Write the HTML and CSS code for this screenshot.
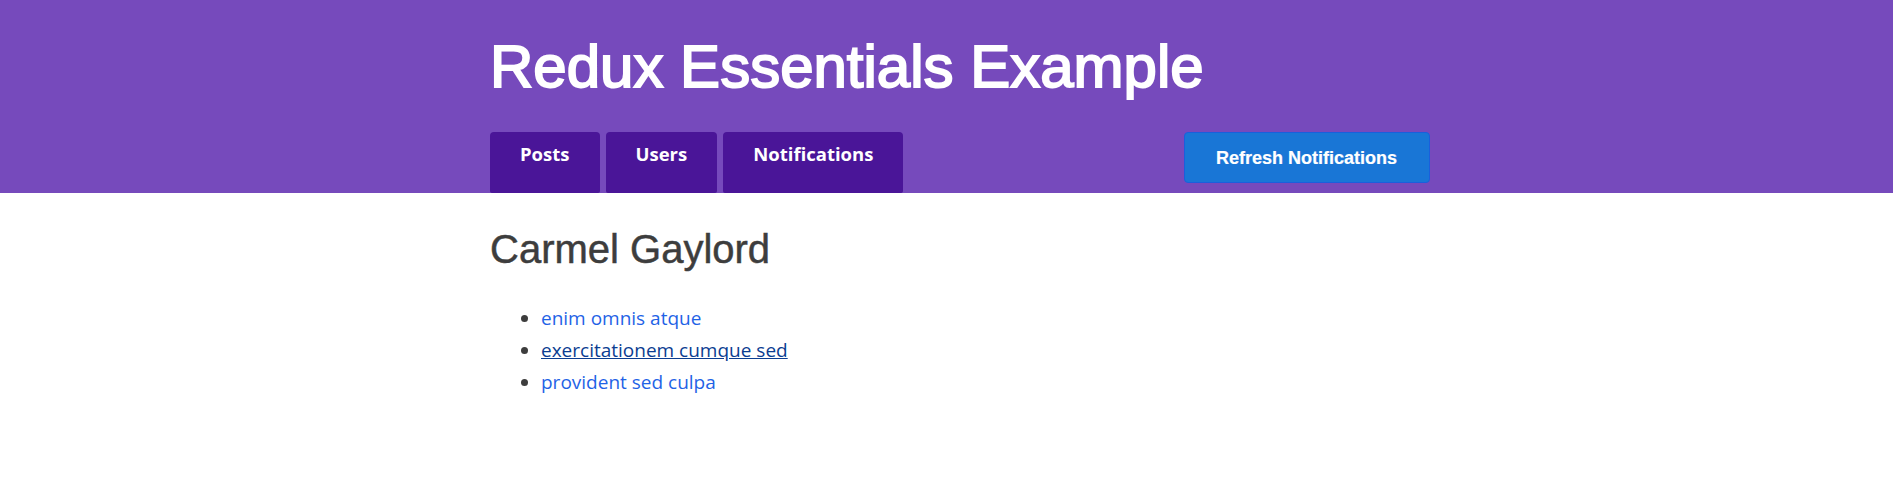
FILE: index.html
```html
<!DOCTYPE html>
<html lang="en">
<head>
<meta charset="utf-8">
<title>Redux Essentials Example</title>
<link rel="stylesheet" href="styles.css">
</head>
<body>
<nav class="nav">
  <section class="container">
    <h1 class="title">Redux Essentials Example</h1>
    <div class="nav-content">
      <div class="nav-links">
        <a class="nav-link" href="#">Posts</a>
        <a class="nav-link" href="#">Users</a>
        <a class="nav-link" href="#">Notifications</a>
      </div>
      <button class="refresh" type="button">Refresh Notifications</button>
    </div>
  </section>
</nav>
<main class="container main">
  <h2 class="user-name">Carmel Gaylord</h2>
  <ul class="post-list">
    <li><a class="post-link" href="#">enim omnis atque</a></li>
    <li><a class="post-link visited" href="#">exercitationem cumque sed</a></li>
    <li><a class="post-link" href="#">provident sed culpa</a></li>
  </ul>
</main>
</body>
</html>
```
FILE: styles.css
```css
html, body {
  margin: 0;
  padding: 0;
  background: #ffffff;
}

body {
  font-family: "Open Sans", "Noto Sans", sans-serif;
  color: #3d3d3d;
}

.container {
  width: 960px;
  margin: 0 auto;
  padding-left: 23.5px;
  box-sizing: border-box;
}

.nav {
  background: #764abc;
}

.title {
  margin: 0;
  padding-top: 34px;
  font-family: "Liberation Sans", Arial, sans-serif;
  font-size: 60px;
  line-height: 66px;
  font-weight: 400;
  color: #ffffff;
  -webkit-text-stroke: 1.9px #ffffff;
}

.nav-content {
  display: flex;
  justify-content: space-between;
  align-items: flex-start;
  margin-top: 32px;
  margin-right: -3px;
}

.nav-links {
  display: flex;
  gap: 6px;
}

.nav-link {
  display: block;
  box-sizing: border-box;
  height: 61px;
  padding: 8px 30px 0;
  background: #4a1598;
  border-radius: 4px 4px 2px 2px;
  color: #ffffff;
  font-family: "Open Sans", "Noto Sans", sans-serif;
  font-weight: 700;
  font-size: 18.5px;
  line-height: 27.75px;
  text-decoration: none;
}

.refresh {
  box-sizing: border-box;
  width: 246px;
  height: 51px;
  padding: 0;
  border: 1px solid #1a5fdc;
  border-radius: 4px;
  background: #1976d6;
  color: #ffffff;
  font-family: "Liberation Sans", Arial, sans-serif;
  font-weight: 700;
  font-size: 18px;
  line-height: 20px;
  -webkit-text-stroke: 0.2px #ffffff;
}

.main {
  padding-top: 32px;
}

.user-name {
  margin: 0;
  font-family: "Liberation Sans", Arial, sans-serif;
  font-weight: 400;
  font-size: 40px;
  line-height: 48px;
  color: #3d3d3d;
  -webkit-text-stroke: 0.5px #3d3d3d;
}

.post-list {
  margin: 29px 0 0;
  padding-left: 51px;
  font-size: 19px;
  line-height: 32px;
  color: #3d3d3d;
}

.post-link {
  color: #1f63e6;
  text-decoration: none;
}

.post-link.visited {
  color: #0b3d91;
  text-decoration: underline;
}
```
